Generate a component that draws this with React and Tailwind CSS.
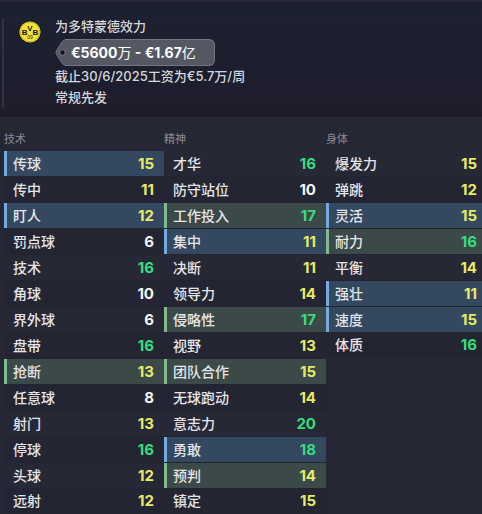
const technical = [
    { name: "传球", value: 15, mark: "blue" },
    { name: "传中", value: 11 },
    { name: "盯人", value: 12, mark: "blue" },
    { name: "罚点球", value: 6 },
    { name: "技术", value: 16 },
    { name: "角球", value: 10 },
    { name: "界外球", value: 6 },
    { name: "盘带", value: 16 },
    { name: "抢断", value: 13, mark: "green" },
    { name: "任意球", value: 8 },
    { name: "射门", value: 13 },
    { name: "停球", value: 16 },
    { name: "头球", value: 12 },
    { name: "远射", value: 12 },
];

const mental = [
    { name: "才华", value: 16 },
    { name: "防守站位", value: 10 },
    { name: "工作投入", value: 17, mark: "green" },
    { name: "集中", value: 11, mark: "blue" },
    { name: "决断", value: 11 },
    { name: "领导力", value: 14 },
    { name: "侵略性", value: 17, mark: "green" },
    { name: "视野", value: 13 },
    { name: "团队合作", value: 15, mark: "green" },
    { name: "无球跑动", value: 14 },
    { name: "意志力", value: 20 },
    { name: "勇敢", value: 18, mark: "blue" },
    { name: "预判", value: 14, mark: "green" },
    { name: "镇定", value: 15 },
];

const physical = [
    { name: "爆发力", value: 15 },
    { name: "弹跳", value: 12 },
    { name: "灵活", value: 15, mark: "blue" },
    { name: "耐力", value: 16, mark: "green" },
    { name: "平衡", value: 14 },
    { name: "强壮", value: 11, mark: "blue" },
    { name: "速度", value: 15, mark: "blue" },
    { name: "体质", value: 16 },
];

const rowColors = {
    blue: "bg-[#344860]",
    green: "bg-[#3b4a48]",
};

const markColors = {
    blue: "shadow-[inset_3px_0_0_#75a9e0]",
    green: "shadow-[inset_3px_0_0_#83b98d]",
};

function valueColor(value) {
    if (value >= 16) return "text-[#35dd7c]";
    if (value >= 11) return "text-[#e6ea66]";
    return "text-[#f4f4f8]";
}

function ClubBadge() {
    return (
        <svg className="size-6 shrink-0" viewBox="0 0 24 24" role="img" aria-label="BVB 09">
            <circle cx="12" cy="12" r="11.5" fill="#14161c" />
            <circle cx="12" cy="12" r="10.6" fill="#f3e23a" />
            <circle cx="12" cy="12" r="9.8" fill="none" stroke="#8d8525" strokeWidth="0.5" />
            <g fill="#17170f" fontFamily="'Liberation Sans', sans-serif" fontWeight="700" textAnchor="middle">
                <text x="6.6" y="14.8" fontSize="8">B</text>
                <text x="12" y="10.6" fontSize="8">V</text>
                <text x="17.4" y="14.8" fontSize="8">B</text>
                <text x="12" y="19.4" fontSize="5" fontWeight="400">09</text>
            </g>
        </svg>
    );
}

function PriceTag() {
    return (
        <div className="flex h-[27px] w-fit items-stretch">
            <svg className="w-4 shrink-0" viewBox="0 0 16 27" aria-hidden="true">
                <path d="M16 .5H11Q8.500 .5 7 3L1.500 11.500Q.3 13.500 1.500 15.500L7 24Q8.500 26.500 11 26.500H16" fill="#555863" stroke="#737680" />
                <circle cx="7.500" cy="13.500" r="3" fill="#757883" />
                <circle cx="7.500" cy="13.500" r="2.200" fill="#12131f" />
            </svg>
            <p className="flex items-center rounded-r-md border-y border-r border-[#737680] bg-[#555863] pr-[18px] text-sm font-bold text-white">
                <span>€5600<span className="font-normal">万</span> - €1.67<span className="font-normal">亿</span></span>
            </p>
        </div>
    );
}

function AttributeTable({ title, attributes, valuePadding }) {
    return (
        <table className="w-full border-separate border-spacing-0">
            <caption className="h-6 text-left text-[11px] leading-6 text-[#8b8c97]">{title}</caption>
            <tbody>
                {attributes.map(({ name, value, mark }) => (
                    <tr key={name} className={`group ${rowColors[mark] ?? "odd:bg-[#272836] even:bg-[#242532]"}`}>
                        <th
                            scope="row"
                            className={`border-b border-[#222431] py-0 pr-0 pl-[9px] text-left text-sm leading-[25px] font-medium text-[#e4e5ea] group-last:border-b-0 group-last:leading-6 ${markColors[mark] ?? ""}`}
                        >
                            {name}
                        </th>
                        <td className={`border-b border-[#222431] py-0 text-right text-[15px] leading-[25px] font-bold group-last:border-b-0 group-last:leading-6 ${valuePadding} ${valueColor(value)}`}>
                            {value}
                        </td>
                    </tr>
                ))}
            </tbody>
        </table>
    );
}

export default function App() {
    return (
        <main className="min-h-screen bg-[#262734] font-[Inter,'Noto_Sans_CJK_SC',sans-serif]">
            <header className="border-t-2 border-b border-t-[#272834] border-b-[#2b2a39] bg-linear-to-b from-[#1c2130] to-[#1e1d2c] pt-4 pb-[9px] pl-0.5">
                <div className="flex border-l-2 border-[#30323f] pl-[14px]">
                    <div className="pt-0.5">
                        <ClubBadge />
                    </div>
                    <div className="pl-[13px] text-[13px] leading-[21px] font-medium text-[#d5d6dc]">
                        <p className="pb-[5px] leading-4">为多特蒙德效力</p>
                        <PriceTag />
                        <p>截止30/6/2025工资为€5.7万/周</p>
                        <p>常规先发</p>
                    </div>
                </div>
            </header>
            <div className="grid grid-cols-[160fr_162fr_156fr] items-start pt-[9px] pl-1">
                <AttributeTable title="技术" attributes={technical} valuePadding="pr-[10px]" />
                <AttributeTable title="精神" attributes={mental} valuePadding="pr-[10px]" />
                <AttributeTable title="身体" attributes={physical} valuePadding="pr-[5px]" />
            </div>
        </main>
    );
}
